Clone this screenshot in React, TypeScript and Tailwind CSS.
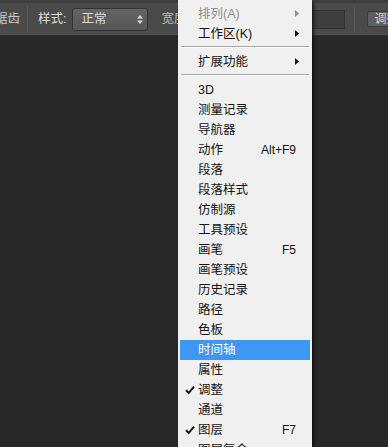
import React from 'react';

type Item =
    | { kind: 'sep' }
    | { kind: 'item'; label: string; shortcut?: string; sub?: boolean; disabled?: boolean; checked?: boolean; active?: boolean };

const items: Item[] = [
    { kind: 'item', label: '排列(A)', sub: true, disabled: true },
    { kind: 'item', label: '工作区(K)', sub: true },
    { kind: 'sep' },
    { kind: 'item', label: '扩展功能', sub: true },
    { kind: 'sep' },
    { kind: 'item', label: '3D' },
    { kind: 'item', label: '测量记录' },
    { kind: 'item', label: '导航器' },
    { kind: 'item', label: '动作', shortcut: 'Alt+F9' },
    { kind: 'item', label: '段落' },
    { kind: 'item', label: '段落样式' },
    { kind: 'item', label: '仿制源' },
    { kind: 'item', label: '工具预设' },
    { kind: 'item', label: '画笔', shortcut: 'F5' },
    { kind: 'item', label: '画笔预设' },
    { kind: 'item', label: '历史记录' },
    { kind: 'item', label: '路径' },
    { kind: 'item', label: '色板' },
    { kind: 'item', label: '时间轴', active: true },
    { kind: 'item', label: '属性' },
    { kind: 'item', label: '调整', checked: true },
    { kind: 'item', label: '通道' },
    { kind: 'item', label: '图层', shortcut: 'F7', checked: true },
    { kind: 'item', label: '图层复合' },
];

const font = { fontFamily: '"Liberation Sans", "Noto Sans CJK SC", sans-serif' };

function Check() {
    return (
        <svg width="10" height="10" viewBox="0 0 10 10" className="absolute left-[5px] top-[5px]">
            <path d="M1 5.2 L3.6 8 L9 1.6" fill="none" stroke="#111" strokeWidth="1.9" />
        </svg>
    );
}

function MenuRow({ item }: { item: Item }) {
    if (item.kind === 'sep') {
        return (
            <div className="h-[8px] px-[3px] pt-[2px]">
                <div className="h-px bg-[#a6a6a6]" />
                <div className="h-px bg-white" />
            </div>
        );
    }
    return (
        <div
            className={`relative h-[20px] mx-[2px] flex items-center pl-[18px] pr-[14px] text-[12.5px] whitespace-nowrap ${
                item.active ? 'bg-[#3d97f3] text-white' : item.disabled ? 'text-[#8e8e8e]' : 'text-[#141414]'
            }`}
        >
            {item.checked && <Check />}
            <span className="flex-1 leading-none">{item.label}</span>
            {item.shortcut && <span className="leading-none text-[12px]">{item.shortcut}</span>}
            {item.sub && (
                <svg width="4" height="7" viewBox="0 0 4 7" className="absolute right-[11px] top-[6px]">
                    <path d="M0 0 L4 3.5 L0 7 Z" fill={item.disabled ? '#8e8e8e' : '#141414'} />
                </svg>
            )}
        </div>
    );
}

export default function App() {
    return (
        <div className="relative w-[388px] h-[447px] overflow-hidden bg-[#282828]" style={font}>
            {/* options bar */}
            <div className="h-[36px] bg-[#4a4a4a] border-t-[3px] border-[#3e3e3e] border-b border-b-[#2e2e2e] flex items-center text-[12.5px] text-[#dcdcdc] whitespace-nowrap">
                <span className="shrink-0 ml-[-30px] w-[50px] text-right text-[#c9c9c9]">消除锯齿</span>
                <div className="shrink-0 ml-[7px] w-px h-[26px] bg-[#333] border-r border-[#5a5a5a]" />
                <span className="shrink-0 ml-[10px]">样式:</span>
                <div className="shrink-0 ml-[6px] w-[76px] h-[23px] rounded-[3px] border border-[#333] bg-gradient-to-b from-[#646464] to-[#565656] flex items-center pl-[8px] pr-[4px]">
                    <span className="flex-1">正常</span>
                    <svg width="6" height="9" viewBox="0 0 6 9">
                        <path d="M0 3.5 L3 0 L6 3.5 Z M0 5.5 L3 9 L6 5.5 Z" fill="#d8d8d8" />
                    </svg>
                </div>
                <span className="shrink-0 ml-[13px] w-[40px] text-[#bdbdbd]">宽度:</span>
                <div className="shrink-0 ml-[110px] w-[34px] h-[19px] bg-[#3e3e3e] border border-[#333]" />
                <div className="shrink-0 ml-[9px] w-px h-[25px] bg-[#333] border-r border-[#5a5a5a]" />
                <div className="shrink-0 ml-[12px] h-[16px] w-[70px] bg-[#5e5e5e] border border-[#3a3a3a] rounded-[2px] pl-[6px] text-[12px] leading-[14px] text-[#d0d0d0]">
                    调整边缘...
                </div>
            </div>

            {/* window menu */}
            <div className="absolute left-[178px] top-0 w-[134px] bg-[#f0f0f0] pt-[4px] shadow-[2px_2px_3px_rgba(0,0,0,0.6)]">
                {items.map((item, i) => (
                    <MenuRow key={i} item={item} />
                ))}
            </div>
        </div>
    );
}
